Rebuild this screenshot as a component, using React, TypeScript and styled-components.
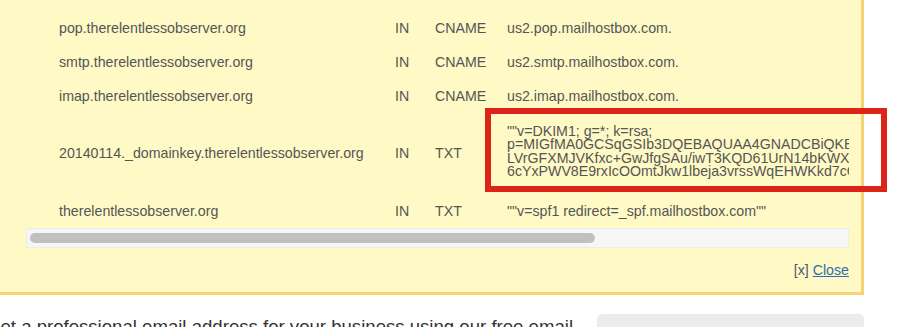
import React from "react";
import styled, { createGlobalStyle } from "styled-components";

const GlobalStyle = createGlobalStyle`
  html, body {
    margin: 0;
    padding: 0;
    background: #fff;
  }
  body {
    font-family: "Liberation Sans", Arial, Helvetica, sans-serif;
    overflow: hidden;
  }
`;

const Screen = styled.div`
  position: relative;
  width: 900px;
  height: 327px;
  overflow: hidden;
`;

const Page = styled.div`
  margin-left: -40px;
  width: 904px;
`;

const Panel = styled.div`
  background: #fffac5;
  border: 3px solid #f5d374;
  border-top: none;
  padding: 11px 12px 14px 63px;
`;

const Scroller = styled.div`
  width: 823px;
  overflow: hidden;
`;

const Records = styled.table`
  width: 1190px;
  border-collapse: collapse;
  table-layout: fixed;
  font-size: 14.2px;
  color: #555;
`;

const Cell = styled.td<{ $w?: number; $pad?: number }>`
  width: ${(p) => (p.$w ? `${p.$w}px` : "auto")};
  padding: 10px 0 10px ${(p) => p.$pad || 0}px;
  line-height: 14px;
  white-space: nowrap;
  vertical-align: middle;
`;

const LongValue = styled.td`
  padding: 12px 0 15px;
  line-height: 13.4px;
  white-space: nowrap;
  vertical-align: middle;
`;

const Track = styled.div`
  height: 18px;
  background: #f6f6f6;
  border: 1px solid #ececec;
  box-sizing: content-box;
  width: 821px;
  display: flex;
  align-items: center;
`;

const Thumb = styled.div<{ $w: number }>`
  margin-left: 3px;
  width: ${(p) => p.$w}px;
  height: 10px;
  border-radius: 5px;
  background: #c0c0c0;
`;

const CloseRow = styled.div`
  margin-top: 14px;
  width: 823px;
  text-align: right;
  font-size: 14.2px;
  line-height: 16px;
  color: #4d5866;
`;

const CloseLink = styled.a`
  color: #2f6cb3;
  text-decoration: underline;
  cursor: pointer;
`;

const Lower = styled.div`
  display: flex;
  align-items: flex-start;
  gap: 17px;
  margin-top: 19px;
  padding-left: 26px;
`;

const Pitch = styled.p`
  margin: 0;
  width: 594px;
  font-size: 18.6px;
  line-height: 26px;
  color: #333;
  white-space: nowrap;
`;

const SignupBox = styled.div`
  flex: 0 0 267px;
  height: 60px;
  background: #ececec;
  border-radius: 5px;
  padding: 11px 14px;
  box-sizing: border-box;
  font-size: 18px;
  font-weight: bold;
  color: #e2e2e2;
`;

const Annotation = styled.div`
  position: absolute;
  left: 485px;
  top: 108px;
  width: 402px;
  height: 84px;
  box-sizing: border-box;
  border: 6px solid #dd2418;
  pointer-events: none;
`;

type Rec = { name: string; type: string; value: React.ReactNode; long?: boolean };

const records: Rec[] = [
  { name: "pop.therelentlessobserver.org", type: "CNAME", value: "us2.pop.mailhostbox.com." },
  { name: "smtp.therelentlessobserver.org", type: "CNAME", value: "us2.smtp.mailhostbox.com." },
  { name: "imap.therelentlessobserver.org", type: "CNAME", value: "us2.imap.mailhostbox.com." },
  {
    name: "20140114._domainkey.therelentlessobserver.org",
    type: "TXT",
    long: true,
    value: (
      <>
        ""v=DKIM1; g=*; k=rsa;
        <br />
        p=MIGfMA0GCSqGSIb3DQEBAQUAA4GNADCBiQKBgQDx7kP2mZr9Hq
        <br />
        LVrGFXMJVKfxc+GwJfgSAu/iwT3KQD61UrN14bKWXn3sT0aYpL8
        <br />
        6cYxPWV8E9rxIcOOmtJkw1lbeja3vrssWqEHWKkd7cQIDAQAB""
      </>
    ),
  },
  {
    name: "therelentlessobserver.org",
    type: "TXT",
    value: '""v=spf1 redirect=_spf.mailhostbox.com""',
  },
];

export default function App() {
  return (
    <Screen>
      <GlobalStyle />
      <Page>
        <Panel>
          <Scroller>
            <Records>
              <tbody>
                {records.map((r) => (
                  <tr key={r.name}>
                    <Cell $w={336} $pad={33}>
                      {r.name}
                    </Cell>
                    <Cell $w={40}>IN</Cell>
                    <Cell $w={72}>{r.type}</Cell>
                    {r.long ? <LongValue>{r.value}</LongValue> : <Cell>{r.value}</Cell>}
                  </tr>
                ))}
              </tbody>
            </Records>
          </Scroller>
          <Track>
            <Thumb $w={565} />
          </Track>
          <CloseRow>
            [x] <CloseLink>Close</CloseLink>
          </CloseRow>
        </Panel>
        <Lower>
          <Pitch>Get a professional email address for your business using our free email</Pitch>
          <SignupBox>Have a domain? Email Sign Up</SignupBox>
        </Lower>
      </Page>
      <Annotation />
    </Screen>
  );
}
